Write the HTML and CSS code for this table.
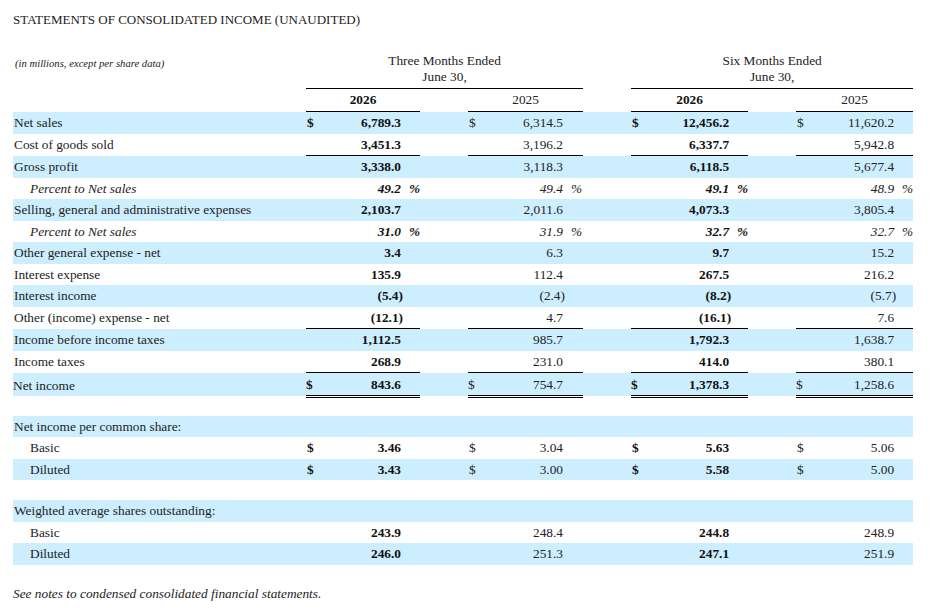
FILE: index.html
```html
<!DOCTYPE html>
<html lang="en">
<head>
  <meta charset="UTF-8" />
  <meta name="viewport" content="width=device-width, initial-scale=1.0" />
  <title>Statements of Consolidated Income</title>
  <link rel="stylesheet" href="styles.css">
</head>
<body>
  <h1 class="title">STATEMENTS OF CONSOLIDATED INCOME (UNAUDITED)</h1>

  <table class="income">
    <colgroup>
      <col class="c-label">
      <col class="c-sym"><col class="c-num1"><col class="c-pct">
      <col class="c-gap">
      <col class="c-sym"><col class="c-num1"><col class="c-pct2">
      <col class="c-gap">
      <col class="c-sym"><col class="c-num2"><col class="c-pct">
      <col class="c-gap">
      <col class="c-sym"><col class="c-num2"><col class="c-pct">
    </colgroup>
    <thead>
      <tr class="period">
        <th class="unit">(in millions, except per share data)</th>
        <th colspan="7" class="span">Three Months Ended<br>June 30,</th>
        <th></th>
        <th colspan="7" class="span">Six Months Ended<br>June 30,</th>
      </tr>
      <tr class="years">
        <th></th>
        <th colspan="3" class="year cur">2026</th>
        <th></th>
        <th colspan="3" class="year">2025</th>
        <th></th>
        <th colspan="3" class="year cur">2026</th>
        <th></th>
        <th colspan="3" class="year">2025</th>
      </tr>
    </thead>
    <tbody id="rows"></tbody>
  </table>

  <p class="note">See notes to condensed consolidated financial statements.</p>

  <script>
    // bold = current year columns
    const groups = [true, false, true, false];

    const rows = [
      { label: "Net sales", band: true, dollar: true, vals: ["6,789.3", "6,314.5", "12,456.2", "11,620.2"] },
      { label: "Cost of goods sold", rule: true, vals: ["3,451.3", "3,196.2", "6,337.7", "5,942.8"] },
      { label: "Gross profit", band: true, vals: ["3,338.0", "3,118.3", "6,118.5", "5,677.4"] },
      { label: "Percent to Net sales", indent: true, pct: true, vals: ["49.2", "49.4", "49.1", "48.9"] },
      { label: "Selling, general and administrative expenses", band: true, vals: ["2,103.7", "2,011.6", "4,073.3", "3,805.4"] },
      { label: "Percent to Net sales", indent: true, pct: true, vals: ["31.0", "31.9", "32.7", "32.7"] },
      { label: "Other general expense - net", band: true, vals: ["3.4", "6.3", "9.7", "15.2"] },
      { label: "Interest expense", vals: ["135.9", "112.4", "267.5", "216.2"] },
      { label: "Interest income", band: true, vals: ["(5.4)", "(2.4)", "(8.2)", "(5.7)"] },
      { label: "Other (income) expense - net", rule: true, vals: ["(12.1)", "4.7", "(16.1)", "7.6"] },
      { label: "Income before income taxes", band: true, vals: ["1,112.5", "985.7", "1,792.3", "1,638.7"] },
      { label: "Income taxes", rule: true, vals: ["268.9", "231.0", "414.0", "380.1"] },
      { label: "Net income", band: true, dollar: true, total: true, vals: ["843.6", "754.7", "1,378.3", "1,258.6"] },
      { spacer: "short" },
      { label: "Net income per common share:", band: true },
      { label: "Basic", indent: true, dollar: true, vals: ["3.46", "3.04", "5.63", "5.06"] },
      { label: "Diluted", indent: true, band: true, dollar: true, vals: ["3.43", "3.00", "5.58", "5.00"] },
      { spacer: "tall" },
      { label: "Weighted average shares outstanding:", band: true },
      { label: "Basic", indent: true, vals: ["243.9", "248.4", "244.8", "248.9"] },
      { label: "Diluted", indent: true, band: true, vals: ["246.0", "251.3", "247.1", "251.9"] }
    ];

    function fmt(v) {
      if (!v) return "";
      if (v.endsWith(")")) return v.slice(0, -1) + '<span class="close">)</span>';
      return v;
    }

    const body = document.getElementById("rows");
    rows.forEach(row => {
      const tr = document.createElement("tr");
      if (row.spacer) {
        tr.className = "spacer " + row.spacer;
        tr.innerHTML = '<td colspan="16"></td>';
        body.appendChild(tr);
        return;
      }
      const cls = [];
      if (row.band) cls.push("band");
      if (row.rule) cls.push("rule");
      if (row.total) cls.push("total");
      if (row.pct) cls.push("ratio");
      tr.className = cls.join(" ");

      let html = `<td class="label${row.indent ? " indent" : ""}">${row.label}</td>`;
      groups.forEach((cur, i) => {
        const c = cur ? " cur" : "";
        const v = row.vals ? row.vals[i] : "";
        if (i > 0) html += '<td class="gap"></td>';
        html += `<td class="sym${c}">${row.dollar ? "$" : ""}</td>`;
        html += `<td class="num${c}">${fmt(v)}</td>`;
        html += `<td class="pct${c}">${row.pct ? "%" : ""}</td>`;
      });
      tr.innerHTML = html;
      body.appendChild(tr);
    });
  </script>
</body>
</html>
```

FILE: styles.css
```css
body {
  margin: 0;
  padding: 12px 13px;
  font-family: "Liberation Serif", "Times New Roman", serif;
  font-size: 13.33px;
  color: #222;
  background-color: #fff;
}
.title {
  font-size: 13px;
  font-weight: normal;
  line-height: 15px;
  margin: 0 0 24px;
}
.income {
  width: 900px;
  border-collapse: collapse;
  table-layout: fixed;
}
.c-label { width: 293px; }
.c-sym { width: 14px; }
.c-num1 { width: 81px; }
.c-num2 { width: 84px; }
.c-pct { width: 19px; }
.c-pct2 { width: 20px; }
.c-gap { width: 48px; }

th,
td {
  padding: 3px 0;
  line-height: 15.5px;
  font-weight: normal;
  white-space: nowrap;
}
.period th {
  line-height: 16px;
  padding: 2px 0 3px;
  vertical-align: bottom;
}
.period .unit {
  text-align: left;
  vertical-align: top;
  padding: 6px 0 0 2px;
  font-size: 10.67px;
  line-height: 12px;
  font-style: italic;
}
.period .span {
  border-bottom: 1px solid #000;
  text-align: center;
}
.years th {
  padding: 3px 0;
  line-height: 16px;
}
.years .year {
  text-align: center;
  border-bottom: 1px solid #000;
}
.cur {
  font-weight: bold;
  color: #111;
}
.band td {
  background-color: #cceeff;
}
.label {
  padding-left: 1px;
}
.label.indent {
  padding-left: 17px;
}
.sym {
  padding-left: 1px;
}
.num {
  text-align: right;
}
.close {
  margin-right: -2px;
}
.pct {
  padding-left: 8px;
}
.ratio .label,
.ratio .num,
.ratio .pct {
  font-style: italic;
}
.rule .sym,
.rule .num,
.rule .pct {
  border-bottom: 1px solid #000;
}
.total td {
  padding: 4px 0 2px;
}
.total .sym,
.total .num,
.total .pct {
  border-bottom: 3px double #000;
}
.spacer td {
  padding: 0;
}
.spacer.short td {
  height: 18px;
}
.spacer.tall td {
  height: 20px;
}
.note {
  margin: 21px 0 0;
  font-style: italic;
  line-height: 15px;
}
```
